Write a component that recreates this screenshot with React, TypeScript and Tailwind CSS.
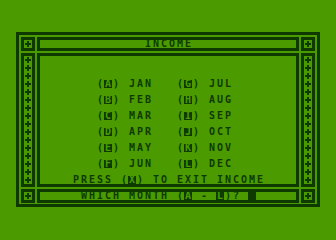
const LINES = [
  "",
  "",
  "",
  "       (a) JAN   (g) JUL",
  "",
  "       (b) FEB   (h) AUG",
  "",
  "       (c) MAR   (i) SEP",
  "",
  "       (d) APR   (j) OCT",
  "",
  "       (e) MAY   (k) NOV",
  "",
  "       (f) JUN   (l) DEC",
  "",
  "    PRESS (x) TO EXIT INCOME",
];

// lowercase letter = inverse video of its capital, '#' = inverse space (cursor)
function Line({ text }: { text: string }) {
  return (
    <div className="flex h-[8px]">
      {text.split("").map((ch, i) => {
        const inv = ch === "#" || (ch >= "a" && ch <= "z");
        const glyph = ch === "#" ? "" : ch.toUpperCase();
        return (
          <span
            key={i}
            className={
              inv
                ? "w-[8px] h-[8px] shrink-0 text-center leading-[8px] bg-[#0e3a00] text-[#4b9a00]"
                : "w-[8px] h-[8px] shrink-0 text-center leading-[8px]"
            }
          >
            {glyph === " " ? "" : glyph}
          </span>
        );
      })}
    </div>
  );
}

function Plus() {
  return (
    <svg width="8" height="8" viewBox="0 0 8 8" className="block shrink-0">
      <rect x="3" y="1" width="2" height="6" fill="#0e3a00" />
      <rect x="1" y="3" width="6" height="2" fill="#0e3a00" />
    </svg>
  );
}

function Box({ children }: { children?: React.ReactNode }) {
  return <div className="border-[3px] border-[#0e3a00] overflow-hidden">{children}</div>;
}

function Strip() {
  return (
    <div className="flex flex-col">
      {Array.from({ length: 16 }).map((_, i) => (
        <Plus key={i} />
      ))}
    </div>
  );
}

export default function App() {
  return (
    <div className="w-[336px] h-[240px] bg-[#4b9a00] pt-[32px] pl-[16px] text-[#0e3a00] font-['DejaVu_Sans_Mono',monospace] font-bold text-[10px]">
      <div className="w-[304px] h-[175px] border-[3px] border-[#0e3a00] pt-[2px] px-[2px] pb-[1px] grid grid-cols-[14px_262px_14px] grid-rows-[14px_134px_14px] gap-[2px]">
        <Box>
          <Plus />
        </Box>
        <Box>
          <Line text="             INCOME" />
        </Box>
        <Box>
          <Plus />
        </Box>

        <Box>
          <Strip />
        </Box>
        <Box>
          {LINES.map((l, i) => (
            <Line key={i} text={l} />
          ))}
        </Box>
        <Box>
          <Strip />
        </Box>

        <Box>
          <Plus />
        </Box>
        <Box>
          <Line text="     WHICH MONTH (a - l)? #" />
        </Box>
        <Box>
          <Plus />
        </Box>
      </div>
    </div>
  );
}
